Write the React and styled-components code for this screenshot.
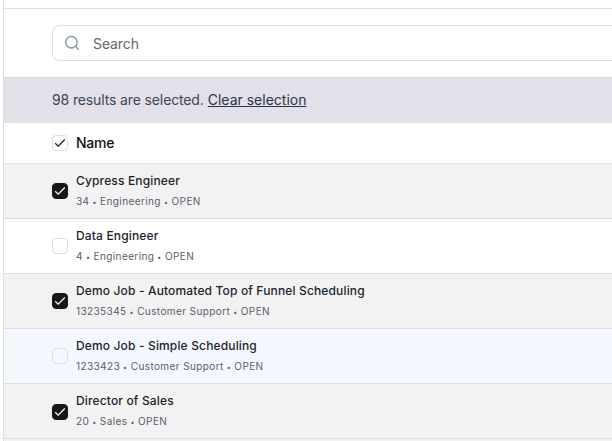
import { useState } from 'react';
import styled, { createGlobalStyle } from 'styled-components';

const GlobalStyle = createGlobalStyle`
	* {
		box-sizing: border-box;
	}

	body {
		margin: 0;
		background-color: #ffffff;
		font-family: Inter, 'Liberation Sans', sans-serif;
		overflow: hidden;
	}
`;

const JOBS = [
	{ id: '34', name: 'Cypress Engineer', department: 'Engineering', checked: true },
	{ id: '4', name: 'Data Engineer', department: 'Engineering', checked: false },
	{
		id: '13235345',
		name: 'Demo Job - Automated Top of Funnel Scheduling',
		department: 'Customer Support',
		checked: true,
	},
	{
		id: '1233423',
		name: 'Demo Job - Simple Scheduling',
		department: 'Customer Support',
		checked: false,
		hovered: true,
	},
	{ id: '20', name: 'Director of Sales', department: 'Sales', checked: true, shift: 1 },
];

const Page = styled.div`
	height: 441px;
	margin-left: 3px;
	border-left: 1px solid #dfdfe2;
	background-color: #f2f2f2;
	overflow: hidden;
`;

const TopLine = styled.div`
	height: 9px;
	border-bottom: 1px solid #dfdfe2;
	background-color: #ffffff;
`;

const SearchBar = styled.div`
	height: 68px;
	padding: 16px 0 0 48px;
	background-color: #ffffff;
`;

const SearchField = styled.label`
	display: flex;
	align-items: center;
	height: 36px;
	padding-left: 11px;
	border: 1px solid #e0e0e2;
	border-right: none;
	border-radius: 8px 0 0 8px;

	& svg {
		flex: none;
	}

	& input {
		flex: 1;
		min-width: 0;
		margin-left: 13px;
		padding: 0;
		border: none;
		outline: none;
		background: none;
		color: #333333;
		font-family: inherit;
		font-size: 14px;
		letter-spacing: -0.1px;
	}

	& input::placeholder {
		color: #666666;
		opacity: 1;
	}
`;

const Banner = styled.div`
	display: flex;
	align-items: center;
	height: 46px;
	padding: 0 0 2px 48px;
	border-top: 1px solid #dad8e0;
	background-color: #e3e0ea;
	color: #3c4657;
	font-size: 14px;
	letter-spacing: -0.13px;
`;

const ClearButton = styled.button`
	margin-left: 4px;
	padding: 0;
	border: none;
	background: none;
	color: #28344a;
	font-family: inherit;
	font-size: 14px;
	text-decoration: underline;
`;

const HeadRow = styled.div`
	display: flex;
	align-items: flex-start;
	height: 41px;
	padding-left: 48px;
	border-bottom: 1px solid #dfe1e8;
	background-color: #ffffff;
`;

const HeadLabel = styled.span`
	margin-top: 11px;
	color: #111111;
	font-size: 14px;
	font-weight: 500;
	line-height: 18px;
	letter-spacing: -0.25px;
`;

const Row = styled.div`
	display: flex;
	align-items: flex-start;
	height: 55px;
	padding-left: 48px;
	border-bottom: 1px solid #d9deea;
	background-color: ${({ $checked, $hovered }) =>
		$checked ? '#f2f2f2' : $hovered ? '#f4f8fe' : '#ffffff'};
`;

const Box = styled.button`
	display: flex;
	align-items: center;
	justify-content: center;
	flex: none;
	width: 16px;
	height: 16px;
	margin: ${({ $top = 0 }) => $top}px 8px 0 0;
	padding: 0;
	border: 1px solid ${({ $filled }) => ($filled ? '#171717' : '#dededf')};
	border-radius: 4px;
	background-color: ${({ $filled }) => ($filled ? '#171717' : 'transparent')};
	color: ${({ $filled }) => ($filled ? '#ffffff' : '#171717')};
`;

const JobInfo = styled.div`
	padding-top: 9px;
	white-space: nowrap;
`;

const JobName = styled.div`
	color: #1c1f2b;
	font-size: 12px;
	font-weight: 500;
	line-height: 16px;
	letter-spacing: 0.15px;
`;

const JobMeta = styled.div`
	margin-top: 5px;
	color: #565f6e;
	font-size: 10px;
	line-height: 15px;
	letter-spacing: 0.4px;
`;

const Dot = styled.span`
	margin: 0 3.3px 0 3px;
	font-size: 7px;
	vertical-align: 0.5px;
`;

const SearchIcon = () => (
	<svg width="16" height="16" viewBox="0 0 16 16" fill="none" stroke="#8d98a9" strokeWidth="1.5">
		<circle cx="7.4" cy="7.2" r="5.7" />
		<path d="M11.5 11.3 14.4 14.2" strokeLinecap="round" />
	</svg>
);

const Checkbox = ({ checked, filled, top, onClick }) => (
	<Box type="button" role="checkbox" aria-checked={checked} $filled={filled} $top={top} onClick={onClick}>
		{checked && (
			<svg width="14" height="14" viewBox="0 0 14 14" fill="none" stroke="currentColor" strokeWidth="1.2">
				<path d="M2.2 7.2 5.2 10.1 11.8 3.5" />
			</svg>
		)}
	</Box>
);

const App = () => {
	const [jobs, setJobs] = useState(JOBS);
	const [count, setCount] = useState(98);

	const onToggle = (id) => {
		const job = jobs.find((item) => item.id === id);
		setCount(count + (job.checked ? -1 : 1));
		setJobs(jobs.map((item) => (item.id === id ? { ...item, checked: !item.checked } : item)));
	};

	const onClear = () => {
		setCount(0);
		setJobs(jobs.map((item) => ({ ...item, checked: false })));
	};

	return (
		<>
			<GlobalStyle />
			<Page>
				<TopLine />
				<SearchBar>
					<SearchField>
						<SearchIcon />
						<input type="text" placeholder="Search" />
					</SearchField>
				</SearchBar>
				<Banner>
					<span>{count} results are selected.</span>
					<ClearButton type="button" onClick={onClear}>
						Clear selection
					</ClearButton>
				</Banner>
				<HeadRow>
					<Checkbox checked={count > 0} top={12} onClick={onClear} />
					<HeadLabel>Name</HeadLabel>
				</HeadRow>
				{jobs.map((job) => (
					<Row key={job.id} $checked={job.checked} $hovered={job.hovered}>
						<Checkbox
							checked={job.checked}
							filled={job.checked}
							top={19 + (job.shift || 0)}
							onClick={() => onToggle(job.id)}
						/>
						<JobInfo>
							<JobName>{job.name}</JobName>
							<JobMeta>
								{job.id}
								<Dot>•</Dot>
								{job.department}
								<Dot>•</Dot>
								OPEN
							</JobMeta>
						</JobInfo>
					</Row>
				))}
			</Page>
		</>
	);
};

export default App;
